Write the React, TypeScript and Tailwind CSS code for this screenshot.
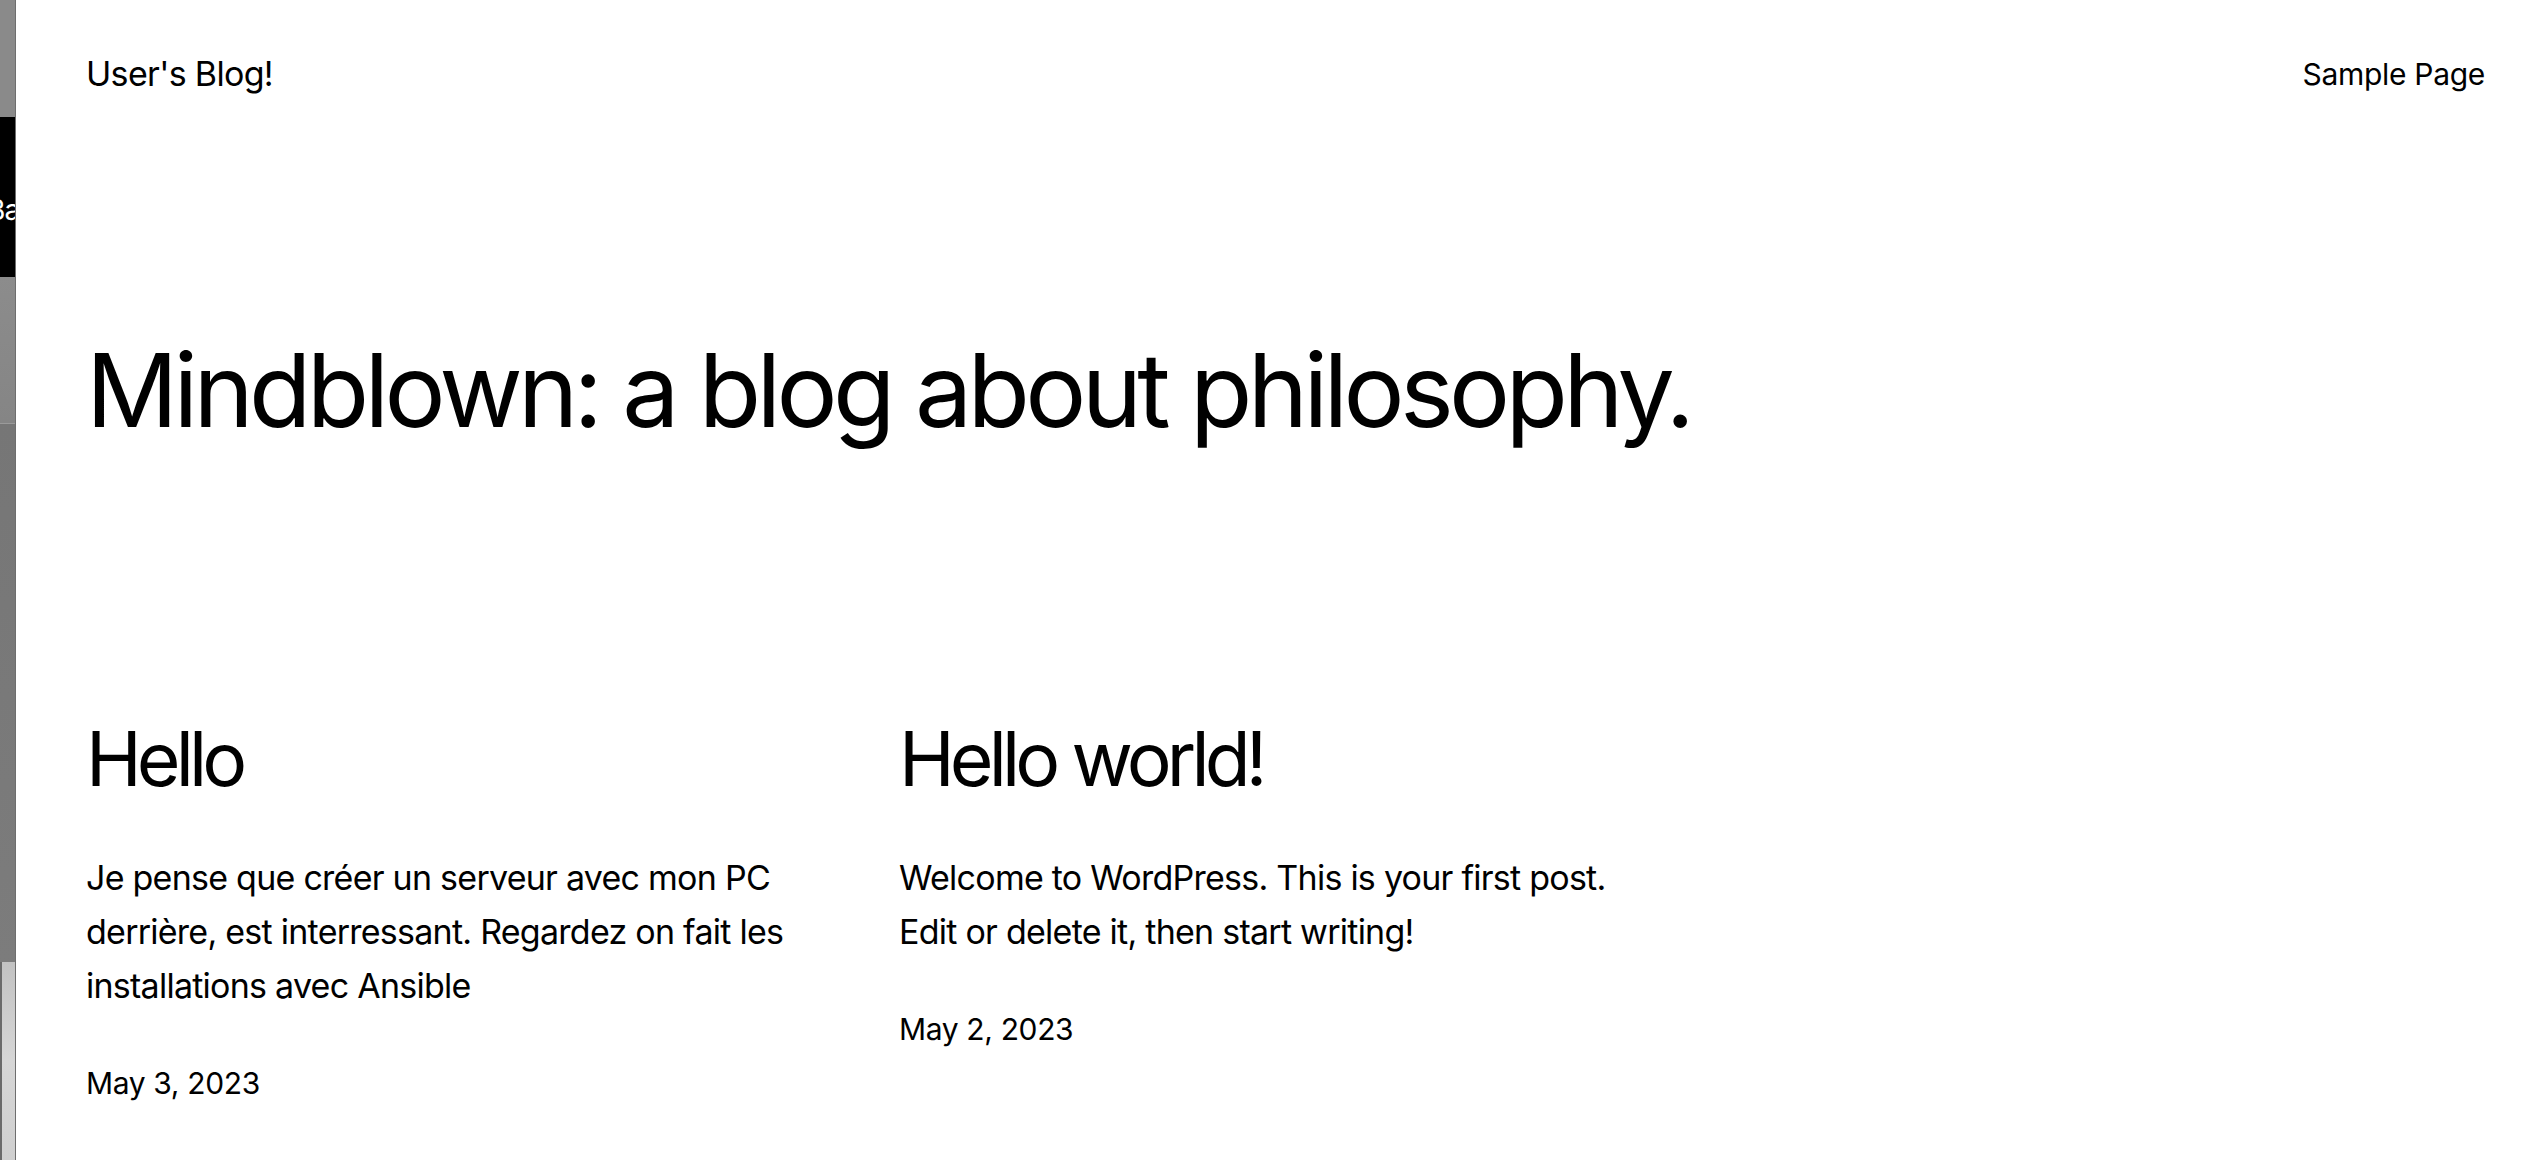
import React from "react";

const font = { fontFamily: "Inter, 'Noto Sans', sans-serif" };

function Strip() {
  return (
    <div className="flex w-[16px] shrink-0 flex-col border-r border-[#6e6e6e]">
      <div className="h-[117px] bg-[#8a8a8a]" />
      <div className="flex h-[160px] items-center overflow-hidden bg-black">
        <span
          className="-ml-[13px] mt-[26px] whitespace-nowrap text-[28px] leading-none text-white tracking-[-0.03em]"
          style={font}
        >
          Ba
        </span>
      </div>
      <div className="h-[146px] bg-gradient-to-b from-[#8c8c8c] to-[#858585]" />
      <div className="h-[1px] bg-[#9a9a9a]" />
      <div className="h-[538px] bg-gradient-to-b from-[#767676] to-[#7c7c7c]" />
      <div className="flex flex-1">
        <div className="w-[2px] bg-[#6a6a6a]" />
        <div className="flex-1 bg-gradient-to-b from-[#c2c2c2] via-[#d6d6d6] to-[#cfcfcf]" />
      </div>
    </div>
  );
}

function Post({ title, body, date }: { title: string; body: string; date: string }) {
  return (
    <div className="flex flex-col">
      <h2 className="text-[75px] leading-[92px] font-normal tracking-[-0.065em]">{title}</h2>
      <p className="mt-[46px] text-[34px] leading-[54px] tracking-[-0.022em]">{body}</p>
      <p className="mt-[48px] text-[30px] leading-[45px] tracking-[-0.012em]">{date}</p>
    </div>
  );
}

export default function App() {
  return (
    <div className="flex h-[1160px] w-full overflow-hidden bg-white text-black" style={font}>
      <Strip />
      <main className="flex flex-1 flex-col pl-[70px] pr-[45px]">
        <header className="flex items-start justify-between pt-[52px]">
          <div className="text-[34px] leading-[44px] tracking-[-0.02em]">User's Blog!</div>
          <nav className="text-[30px] leading-[44px] tracking-[-0.01em]">Sample Page</nav>
        </header>
        <h1 className="mt-[232px] text-[102px] leading-[124px] font-normal tracking-[-0.046em]">
          Mindblown: a blog about philosophy.
        </h1>
        <div className="mt-[261px] grid grid-cols-[repeat(3,740px)] gap-x-[73px]">
          <Post
            title="Hello"
            body="Je pense que créer un serveur avec mon PC derrière, est interressant. Regardez on fait les installations avec Ansible"
            date="May 3, 2023"
          />
          <Post
            title="Hello world!"
            body="Welcome to WordPress. This is your first post. Edit or delete it, then start writing!"
            date="May 2, 2023"
          />
        </div>
      </main>
    </div>
  );
}
